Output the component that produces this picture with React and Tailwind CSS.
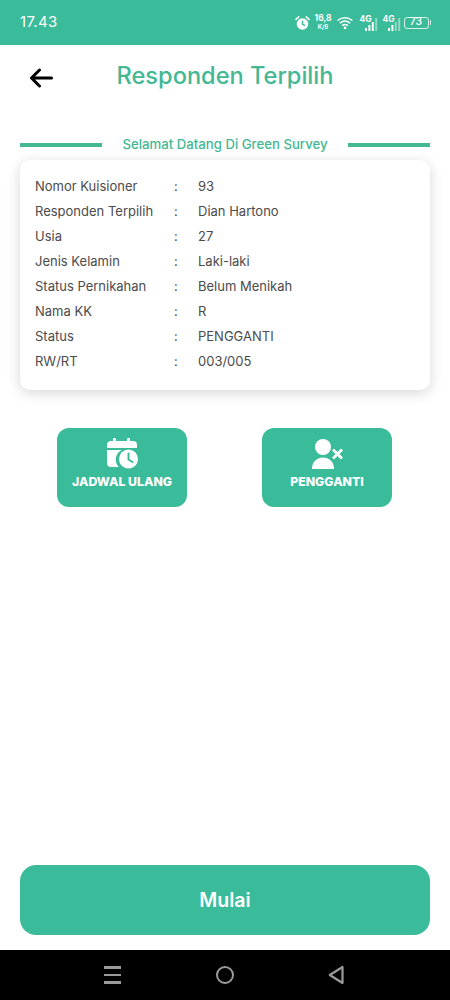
const rows = [
  ['Nomor Kuisioner', '93'],
  ['Responden Terpilih', 'Dian Hartono'],
  ['Usia', '27'],
  ['Jenis Kelamin', 'Laki-laki'],
  ['Status Pernikahan', 'Belum Menikah'],
  ['Nama KK', 'R'],
  ['Status', 'PENGGANTI'],
  ['RW/RT', '003/005'],
];

function Signal({ active }) {
  const bars = [3, 6, 9, 13];
  return (
    <svg width="13" height="13" viewBox="0 0 13 13">
      {bars.map((h, i) => (
        <rect key={i} x={i * 3.4} y={13 - h} width="2" height={h} fill="white" opacity={i < active ? 1 : 0.45} />
      ))}
    </svg>
  );
}

function Mobile({ active }) {
  return (
    <div className="relative w-[18px] h-[16px]">
      <span className="absolute left-0 top-[-1px] text-[8.5px] leading-[10px] font-bold text-white">4G</span>
      <div className="absolute right-0 bottom-0">
        <Signal active={active} />
      </div>
    </div>
  );
}

function StatusBar() {
  return (
    <div className="h-[45px] shrink-0 bg-[#3abb9a] flex items-center pl-[20px] pr-[19px] text-white">
      <span className="text-[15px] tracking-[0.3px]">17.43</span>
      <div className="ml-auto flex items-center">
        <svg width="15" height="14" viewBox="0 0 16 15" className="mr-[6px]">
          <path d="M1 3.6 L4 1 M15 3.6 L12 1" stroke="white" strokeWidth="1.7" strokeLinecap="round" />
          <circle cx="8" cy="8.6" r="6.2" fill="white" />
          <path d="M8 5 V8.8 L10.6 10.4" stroke="#3abb9a" strokeWidth="1.5" fill="none" />
        </svg>
        <div className="w-[15px] flex flex-col items-center font-bold leading-[8px] mr-[6px]">
          <span className="text-[8.5px]">16,8</span>
          <span className="text-[6px] mt-[1px]">K/S</span>
        </div>
        <svg width="16" height="14" viewBox="0 0 17 15" className="mr-[7px]">
          <g fill="none" stroke="white" strokeWidth="1.5" strokeLinecap="round">
            <path d="M1 4.6 C5.4 0.9 11.6 0.9 16 4.6" />
            <path d="M3.4 7.4 C6.4 5 10.6 5 13.6 7.4" />
            <path d="M5.8 10 C7.4 8.9 9.6 8.9 11.2 10" />
          </g>
          <rect x="7.2" y="11.4" width="2.6" height="2.6" fill="white" />
        </svg>
        <Mobile active={3} />
        <div className="w-[5px]" />
        <Mobile active={2} />
        <div className="ml-[3px] w-[25px] h-[12px] border border-white/80 rounded-[3px] flex items-center justify-center text-[10.5px] leading-none font-medium">
          73
        </div>
        <div className="ml-[1px] w-[1.5px] h-[5px] bg-white/80 rounded-r-sm" />
      </div>
    </div>
  );
}

function CalendarClock() {
  return (
    <svg width="31" height="31" viewBox="0 0 31 31" fill="white">
      <rect x="6" y="0" width="3" height="5" rx="1.2" />
      <rect x="20" y="0" width="3" height="5" rx="1.2" />
      <path d="M0 10 V6 a4 4 0 0 1 4-3 H26 a4 4 0 0 1 4 3 V10 Z" />
      <path d="M0 12 H15 a10.5 10.5 0 0 0 -3.2 17 H4 a4 4 0 0 1 -4 -4 Z" />
      <circle cx="21.5" cy="21" r="9.5" />
      <path d="M21.5 15.5 V21.5 L25.5 24" fill="none" stroke="#3abb9a" strokeWidth="2" strokeLinecap="round" />
    </svg>
  );
}

function UserX() {
  return (
    <svg width="31" height="30" viewBox="0 0 31 30" fill="white">
      <circle cx="11" cy="8" r="8" />
      <path d="M0 30 C0 22.5 5 18.5 11 18.5 C17 18.5 22 22.5 22 30 Z" />
      <path d="M21 10.5 L30 19.5 M30 10.5 L21 19.5" stroke="white" strokeWidth="2.8" fill="none" />
    </svg>
  );
}

function ActionButton({ icon, label }) {
  return (
    <button className="w-[130px] h-[79px] bg-[#3abb9a] rounded-[12px] flex flex-col items-center pt-[10px] text-white">
      <div className="h-[31px] flex items-center justify-center">{icon}</div>
      <span className="mt-[4px] text-[12.3px] leading-[18px] font-extrabold">{label}</span>
    </button>
  );
}

export default function App() {
  return (
    <div className="w-[450px] h-[1000px] flex flex-col bg-white overflow-hidden font-['Inter','Noto_Sans',sans-serif]">
      <StatusBar />

      <div className="h-[64px] shrink-0 relative flex items-center justify-center pb-[2px]">
        <svg width="24" height="20" viewBox="0 0 24 20" className="absolute left-[29px] top-[23px]">
          <path d="M22.5 10 H2.5 M10.5 2 L2.5 10 L10.5 18" fill="none" stroke="black" strokeWidth="3" strokeLinecap="round" strokeLinejoin="round" />
        </svg>
        <h1 className="text-[23.6px] leading-[32px] font-medium text-[#43b893]">Responden Terpilih</h1>
      </div>

      <div className="mt-[25px] mx-[20px] h-[20px] flex items-center">
        <div className="w-[82px] h-[4px] bg-[#43b893] mt-[2px]" />
        <span className="flex-1 text-center text-[13.2px] font-medium text-[#43b893] pt-[2px]">Selamat Datang Di Green Survey</span>
        <div className="w-[82px] h-[4px] bg-[#43b893] mt-[2px]" />
      </div>

      <div className="mt-[6px] mx-[20px] h-[230px] bg-white rounded-[10px] shadow-[0_3px_14px_rgba(0,0,0,0.16)] pl-[15px] pt-[14px]">
        {rows.map(([label, value]) => (
          <div key={label} className="h-[25px] flex items-center text-[13px] text-[#4b4b4b]">
            <span className="w-[139px]">{label}</span>
            <span className="w-[24px]">:</span>
            <span>{value}</span>
          </div>
        ))}
      </div>

      <div className="mt-[38px] ml-[57px] flex gap-[75px]">
        <ActionButton icon={<CalendarClock />} label="JADWAL ULANG" />
        <ActionButton icon={<UserX />} label="PENGGANTI" />
      </div>

      <div className="flex-1" />

      <button className="mx-[20px] h-[70px] shrink-0 bg-[#3abb9a] rounded-[16px] text-white text-[19.5px] font-semibold pt-[1px]">
        Mulai
      </button>

      <div className="mt-[15px] h-[50px] shrink-0 bg-black relative flex items-center">
        <div className="ml-[104px] w-[17px] flex flex-col gap-[5px]">
          <div className="h-[2.5px] bg-[#9a9a9a]" />
          <div className="h-[2.5px] bg-[#9a9a9a]" />
          <div className="h-[2.5px] bg-[#9a9a9a]" />
        </div>
        <div className="ml-[95px] w-[18px] h-[18px] rounded-full border-2 border-[#9a9a9a]" />
        <svg width="16" height="20" viewBox="0 0 16 20" className="ml-[94px]">
          <path d="M14.5 2 V18 L1.8 10 Z" fill="none" stroke="#9a9a9a" strokeWidth="2.2" strokeLinejoin="round" />
        </svg>
      </div>
    </div>
  );
}
